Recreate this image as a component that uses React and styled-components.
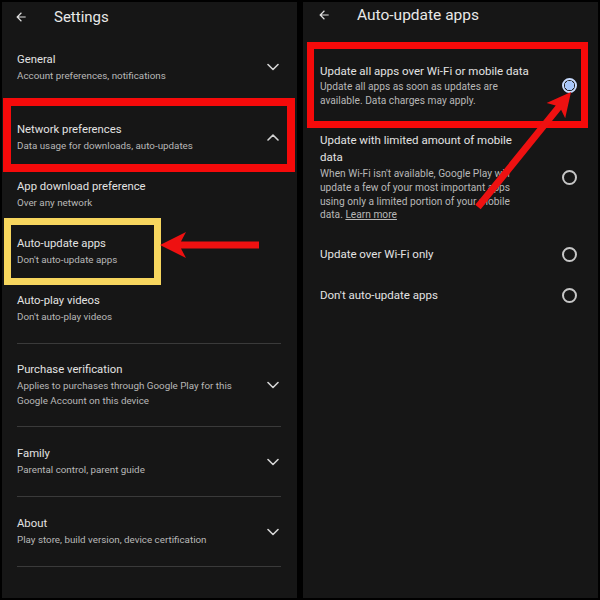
import styled, { createGlobalStyle } from 'styled-components';

const Global = createGlobalStyle`
  html, body {
    margin: 0;
    padding: 0;
    background: #000;
  }
  * { box-sizing: border-box; }
`;

const Frame = styled.div`
  position: relative;
  display: flex;
  gap: 6px;
  width: 600px;
  height: 600px;
  padding: 2px;
  background: #000;
  font-family: Roboto, "Liberation Sans", sans-serif;
`;

const Panel = styled.div`
  flex: 1;
  display: flex;
  flex-direction: column;
  background: #161616;
  overflow: hidden;
`;

const Header = styled.div`
  display: flex;
  align-items: center;
  gap: 26px;
  height: ${(p) => p.$h}px;
  padding-left: ${(p) => p.$pl}px;
  flex-shrink: 0;
  h1 {
    margin: 0;
    font-size: ${(p) => p.$fs}px;
    font-weight: 400;
    color: #e8e8e8;
  }
`;

const Row = styled.div`
  position: relative;
  display: flex;
  align-items: center;
  justify-content: space-between;
  flex-shrink: 0;
  height: ${(p) => p.$h}px;
  margin: 0 2px 0 1px;
  padding: ${(p) => p.$pt || 0}px 16px 0 14px;
  outline: ${(p) => (p.$boxed ? '8px solid #f50a0a' : 'none')};
  outline-offset: -8px;
`;

const Text = styled.div`
  display: flex;
  flex-direction: column;
  max-width: 232px;
`;

const Title = styled.div`
  font-size: 11.3px;
  line-height: 16px;
  color: #e3e3e3;
`;

const Sub = styled.div`
  font-size: 9.8px;
  line-height: 15px;
  color: #b8b8b8;
`;

const Divider = styled.div`
  height: 1px;
  flex-shrink: 0;
  margin: ${(p) => p.$mt || 0}px 16px 0 15px;
  background: #3a3a3a;
`;

const Highlight = styled.div`
  position: absolute;
  top: 2px;
  left: 1px;
  width: 157px;
  height: 67px;
  border: 7px solid #f7d65e;
  pointer-events: none;
`;

const Option = styled.div`
  display: flex;
  align-items: center;
  justify-content: space-between;
  flex-shrink: 0;
  height: ${(p) => p.$h}px;
  margin: ${(p) => p.$mt || 0}px 10px 0 4px;
  padding: ${(p) => p.$pt || 0}px 11px ${(p) => p.$pb || 0}px 13px;
  outline: ${(p) => (p.$boxed ? '7px solid #f50a0a' : 'none')};
  outline-offset: -7px;
`;

const OptText = styled.div`
  display: flex;
  flex-direction: column;
  width: 212px;
`;

const OptTitle = styled.div`
  font-size: 11.5px;
  line-height: 17px;
  color: #e3e3e3;
`;

const OptSub = styled.div`
  max-width: 200px;
  margin-top: ${(p) => p.$mt || 0}px;
  font-size: 10.2px;
  line-height: 13.6px;
  color: #b8b8b8;
  a {
    color: #b8b8b8;
    text-decoration: underline;
  }
`;

const Radio = styled.span`
  width: 15px;
  height: 15px;
  border-radius: 50%;
  flex-shrink: 0;
  border: 2px solid ${(p) => (p.$on ? '#c9dcff' : '#c6c6c6')};
  background: ${(p) => (p.$on ? 'radial-gradient(circle, #a8c7fa 0 4.5px, #161616 5px)' : 'transparent')};
`;

const Overlay = styled.svg`
  position: absolute;
  top: 0;
  left: 0;
  pointer-events: none;
`;

const Back = () => (
  <svg width="14" height="14" viewBox="0 0 24 24">
    <path fill="#e0e0e0" d="M20 11H7.83l5.59-5.59L12 4l-8 8 8 8 1.41-1.41L7.83 13H20v-2z" />
  </svg>
);

const Chevron = ({ up }) => (
  <svg width="12" height="8" viewBox="0 0 12 8">
    <path
      d={up ? 'M1 7L6 2l5 5' : 'M1 1.5l5 5 5-5'}
      fill="none"
      stroke="#d4d4d4"
      strokeWidth="1.6"
      strokeLinecap="round"
      strokeLinejoin="round"
    />
  </svg>
);

const Setting = ({ title, sub, h, pt, boxed, chevron, children }) => (
  <Row $h={h} $pt={pt} $boxed={boxed}>
    <Text>
      <Title>{title}</Title>
      <Sub>{sub}</Sub>
    </Text>
    {chevron && <Chevron up={chevron === 'up'} />}
    {children}
  </Row>
);

export default function App() {
  return (
    <>
      <Global />
      <Frame>
        <Panel>
          <Header $h={30} $pl={12} $fs={15}>
            <Back />
            <h1>Settings</h1>
          </Header>
          <Setting h={66} pt={4} title="General" sub="Account preferences, notifications" chevron="down" />
          <Setting h={74} pt={4} boxed title="Network preferences" sub="Data usage for downloads, auto-updates" chevron="up" />
          <Setting h={44} title="App download preference" sub="Over any network" />
          <Setting h={70} title="Auto-update apps" sub="Don't auto-update apps">
            <Highlight />
          </Setting>
          <Setting h={44} title="Auto-play videos" sub="Don't auto-play videos" />
          <Divider $mt={13} />
          <Setting
            h={82}
            title="Purchase verification"
            sub="Applies to purchases through Google Play for this Google Account on this device"
            chevron="down"
          />
          <Divider />
          <Setting h={69} title="Family" sub="Parental control, parent guide" chevron="down" />
          <Divider />
          <Setting h={69} title="About" sub="Play store, build version, device certification" chevron="down" />
          <Divider />
        </Panel>

        <Panel>
          <Header $h={26} $pl={14} $fs={15.5}>
            <Back />
            <h1>Auto-update apps</h1>
          </Header>
          <Option $h={86} $mt={14} $boxed>
            <OptText>
              <OptTitle>Update all apps over Wi-Fi or mobile data</OptTitle>
              <OptSub>Update all apps as soon as updates are available. Data charges may apply.</OptSub>
            </OptText>
            <Radio $on />
          </Option>
          <Option $h={106} $pt={4} $pb={12}>
            <OptText>
              <OptTitle>Update with limited amount of mobile data</OptTitle>
              <OptSub $mt={1}>
                When Wi-Fi isn't available, Google Play will update a few of your most important apps using only a
                limited portion of your mobile data. <a>Learn more</a>
              </OptSub>
            </OptText>
            <Radio />
          </Option>
          <Option $h={40}>
            <OptTitle>Update over Wi-Fi only</OptTitle>
            <Radio />
          </Option>
          <Option $h={42}>
            <OptTitle>Don't auto-update apps</OptTitle>
            <Radio />
          </Option>
        </Panel>

        <Overlay width="600" height="600" viewBox="0 0 600 600">
          <polygon
            fill="#ee1111"
            points="160,245 186,232 181,241.5 259,241.5 259,248.5 181,248.5 186,258"
          />
          <polygon
            fill="#ee1111"
            points="571,92 565.2,118.3 561.1,109.8 480.7,209.2 475.3,204.8 555.7,105.4 546.6,103.1"
          />
        </Overlay>
      </Frame>
    </>
  );
}
